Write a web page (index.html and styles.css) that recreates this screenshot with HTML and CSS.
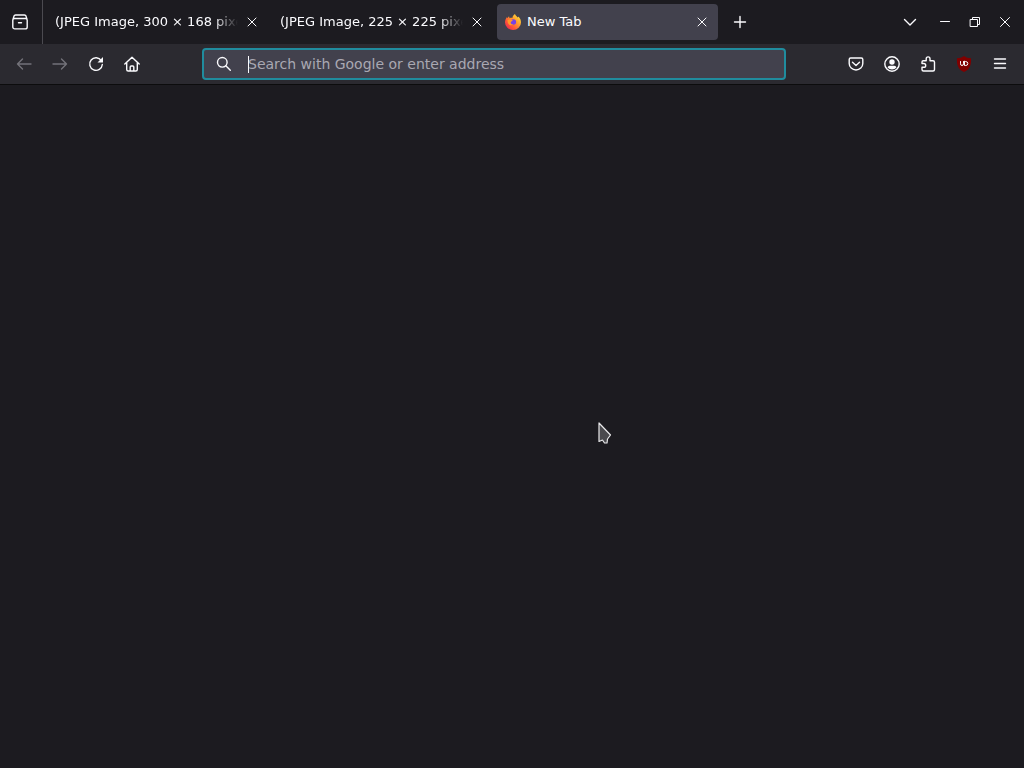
FILE: index.html
```html
<!DOCTYPE html>
<html lang="en">
<head>
<meta charset="UTF-8">
<meta name="viewport" content="width=device-width, initial-scale=1">
<title>New Tab</title>
<link rel="stylesheet" href="styles.css">
</head>
<body>

<!-- shapes used more than once -->
<svg class="defs" aria-hidden="true">
	<symbol id="close" viewBox="0 0 16 16">
		<path d="M4 4l8 8M12 4l-8 8" />
	</symbol>
</svg>

<header class="tabbar">
	<button class="view-button" aria-label="Firefox View">
		<svg class="icon" viewBox="0 0 16 16"><path class="bold" d="M3.500 1h9M2.500 4.500h11a1.700 1.700 0 0 1 1.700 1.700v6.700a2 2 0 0 1-2 2H2.800a2 2 0 0 1-2-2V6.200a1.700 1.700 0 0 1 1.700-1.700zM1 5.200l1-3.100q.4-1.100 1.500-1.100M15 5.200l-1-3.100Q13.600 1 12.500 1M6.500 8.800h3" /></svg>
	</button>

	<nav class="tabs">
		<div class="tab">
			<a class="tab-label fade" href="#">(JPEG Image, 300 × 168 pixels)</a>
			<button class="tab-close" aria-label="Close tab"><svg class="icon"><use href="#close" /></svg></button>
		</div>
		<div class="tab">
			<a class="tab-label fade" href="#">(JPEG Image, 225 × 225 pixels)</a>
			<button class="tab-close" aria-label="Close tab"><svg class="icon"><use href="#close" /></svg></button>
		</div>
		<div class="tab selected">
			<svg class="favicon" viewBox="0 0 16 16" aria-hidden="true">
				<defs>
					<linearGradient id="flame" x1="1" y1="0" x2="0" y2="1">
						<stop offset="0" stop-color="#fff44f" />
						<stop offset=".35" stop-color="#ffa62b" />
						<stop offset=".65" stop-color="#ff5a36" />
						<stop offset="1" stop-color="#e3165d" />
					</linearGradient>
				</defs>
				<path fill="url(#flame)" d="M10 0c.4 1.500 1.600 2.300 2.700 3.400.5-.1.600-.4.600-.8C15 4 16 6.200 16 8.500a8 7.500 0 0 1-16 0C0 6.300.8 4.500 2 3l.3 1.300L4 2.300l.6 1.900c1-.5 2-.5 2.800-.3C7.500 2.300 8.500.8 10 0z" />
				<circle fill="#7542e5" cx="8.300" cy="8" r="2.800" />
				<path fill="#ff9a2a" d="M2.500 6.200c1.700-1.200 3.600-.9 5.300.4-.4.900-1.700.9-2.100 1.500-.3 1.500.9 2.500 2.600 2.200-2.300 2-5.800.5-5.800-4.100z" />
			</svg>
			<a class="tab-label" href="#" aria-current="page">New Tab</a>
			<button class="tab-close" aria-label="Close tab"><svg class="icon"><use href="#close" /></svg></button>
		</div>
	</nav>
	<button class="tool new-tab" aria-label="Open a new tab">
		<svg class="icon" viewBox="0 0 16 16"><path class="bold" d="M8 2.500v11M2.500 8h11" /></svg>
	</button>

	<div class="window-controls">
		<button class="tool list-tabs" aria-label="List all tabs">
			<svg class="icon" viewBox="0 0 16 16"><path class="bold" d="M2.500 5.500L8 11l5.500-5.500" /></svg>
		</button>
		<button class="win" aria-label="Minimize"><svg class="icon" viewBox="0 0 16 16"><path d="M3.500 7.500h9" /></svg></button>
		<button class="win" aria-label="Restore"><svg class="icon" viewBox="0 0 16 16"><path d="M3.500 5.500h7v7h-7zM5.500 5.500v-2h7v7h-2" /></svg></button>
		<button class="win" aria-label="Close"><svg class="icon" viewBox="0 0 16 16"><path d="M3.500 3.500l9 9M12.500 3.500l-9 9" /></svg></button>
	</div>
</header>

<div class="toolbar">
	<button class="tool" aria-label="Back" disabled>
		<svg class="icon" viewBox="0 0 16 16"><path class="bold" d="M15 8H1.500M6.500 3l-5 5 5 5" /></svg>
	</button>
	<button class="tool" aria-label="Forward" disabled>
		<svg class="icon" viewBox="0 0 16 16"><path class="bold" d="M1 8h13.500M9.500 3l5 5-5 5" /></svg>
	</button>
	<button class="tool" aria-label="Reload">
		<svg class="icon" viewBox="0 0 16 16"><path class="bold" d="M13.300 4.600A6.300 6.300 0 1 0 14.300 8.500" /><path class="solid" d="M15 1v5.500H9.500z" /></svg>
	</button>
	<button class="tool" aria-label="Home">
		<svg class="icon" viewBox="0 0 16 16"><path class="bold" d="M.8 8L8 1.200 15.200 8M2.700 6.800v6.700q0 1.500 1.500 1.500h7.600q1.500 0 1.500-1.500V6.800M6.200 15v-4q0-1 1-1h1.600q1 0 1 1v4" /></svg>
	</button>

	<label class="urlbar">
		<svg class="icon" viewBox="0 0 16 16" aria-hidden="true"><circle class="bold" cx="6.300" cy="6.300" r="4.800" /><path class="bold" d="M9.800 9.800l4.500 4.500" /></svg>
		<span class="field">
			<input type="text" placeholder="Search with Google or enter address" aria-label="Search with Google or enter address">
		</span>
	</label>

	<button class="tool" aria-label="Save to Pocket">
		<svg class="icon" viewBox="0 0 16 16"><path class="bold" d="M2.700 2h10.600q1.500 0 1.500 1.500v4a6.800 6.500 0 0 1-13.600 0v-4Q1.200 2 2.700 2zM4.500 6.300L8 9.500l3.500-3.200" /></svg>
	</button>
	<button class="tool" aria-label="Account">
		<svg class="icon" viewBox="0 0 16 16"><circle class="bold" cx="8" cy="8" r="7.200" /><circle class="solid" cx="8" cy="6" r="2.700" /><path class="solid" d="M3.500 11.500q.4-1.700 2.200-1.700h4.600q1.800 0 2.200 1.700Q10.700 13.500 8 13.500T3.500 11.500z" /></svg>
	</button>
	<button class="tool" aria-label="Extensions">
		<svg class="icon" viewBox="0 0 16 16"><path class="bold" d="M2 7.500V6q0-1.200 1.200-1.200h3V2.800a1.900 1.900 0 0 1 3.800 0v2h3q1.500 0 1.500 1.500v7.200q0 1.500-1.500 1.500H3.500Q2 15 2 13.500v-2.200h1.800a1.900 1.900 0 0 0 0-3.800z" /></svg>
	</button>
	<button class="tool" aria-label="uBlock Origin">
		<svg class="icon" viewBox="0 0 16 16"><path class="shield" d="M8 0c2.300 1.600 4 2.200 7 2.300C15.500 9 13.500 14 8 16 2.500 14 .5 9 1 2.300 4 2.200 5.700 1.600 8 0z" /><path d="M4.500 5.500v2.300q0 1.700 1.500 1.700t1.500-1.700V5.500M8.500 5.500v4h1.300a2 2 0 0 0 0-4z" /></svg>
	</button>
	<button class="tool" aria-label="Menu">
		<svg class="icon" viewBox="0 0 16 16"><path class="bold" d="M2.500 3h11M2.500 7.500h11M2.500 12h11" /></svg>
	</button>
</div>

<main class="page"></main>

<svg class="pointer" viewBox="0 0 14 22" aria-hidden="true">
	<path d="M1 1v18.500l3.500-1.500 2 3H9l.5-4 3-4z" />
</svg>

</body>
</html>
```

FILE: styles.css
```css
* {
	box-sizing: border-box;
}

body {
	margin: 0;
	min-height: 100vh;
	display: flex;
	flex-direction: column;
	background: #1c1b20;
	color: #fbfbfe;
	font: 14px/20px "DejaVu Sans", sans-serif;
}

button {
	display: flex;
	align-items: center;
	justify-content: center;
	flex: none;
	padding: 0;
	border: 0;
	background: none;
	color: inherit;
}

button:disabled {
	color: #737279;
}

.defs {
	display: none;
}

.icon {
	display: block;
	flex: none;
	width: 16px;
	height: 16px;
	fill: none;
	stroke: currentColor;
	stroke-width: 1;
	stroke-linecap: round;
	stroke-linejoin: round;
}

.bold {
	stroke-width: 1.4;
}

.solid {
	fill: currentColor;
	stroke: none;
}

.shield {
	fill: #800000;
	stroke: none;
}

/* tab strip */

.tabbar {
	display: flex;
	align-items: center;
	height: 44px;
	background: #1c1b20;
	font-size: 13px;
}

.view-button {
	width: 43px;
	height: 44px;
	padding-right: 2px;
	border-right: 1px solid #4b4a50;
}

.tabs {
	display: flex;
	flex: 0 1 675px;
	gap: 4px;
	min-width: 0;
	padding-left: 4px;
}

.tab {
	display: flex;
	align-items: center;
	flex: 1 1 0;
	min-width: 0;
	height: 36px;
	padding: 0 8px;
	border-radius: 4px;
}

.selected {
	background: #42414d;
}

.favicon {
	flex: none;
	width: 16px;
	height: 16px;
	margin-right: 6px;
}

.tab-label {
	flex: 1;
	overflow: hidden;
	white-space: nowrap;
	color: inherit;
	text-decoration: none;
}

.fade {
	margin-right: 6px;
	-webkit-mask-image: linear-gradient(to left, transparent, #000 24px);
	mask-image: linear-gradient(to left, transparent, #000 24px);
}

.tool {
	width: 36px;
	height: 36px;
}

.new-tab {
	margin-left: 4px;
}

.window-controls {
	display: flex;
	align-items: center;
	margin-left: auto;
	padding-right: 4px;
}

.list-tabs {
	margin-right: 2px;
}

.win {
	width: 30px;
	height: 36px;
}

/* navigation bar */

.toolbar {
	display: flex;
	align-items: center;
	height: 41px;
	padding: 0 6px;
	background: #2b2a30;
	border-bottom: 1px solid #0c0c0d;
}

.urlbar {
	display: flex;
	align-items: center;
	flex: 1;
	gap: 16px;
	min-width: 0;
	height: 32px;
	margin: 0 52px;
	padding: 0 12px;
	background: #42414d;
	border: 2px solid #208c9e;
	border-radius: 4px;
}

.field {
	position: relative;
	flex: 1;
	min-width: 0;
}

/* text caret */
.field::before {
	content: "";
	position: absolute;
	top: 2px;
	left: 0;
	width: 1px;
	height: 17px;
	background: #fbfbfe;
}

.field input {
	display: block;
	width: 100%;
	padding: 0;
	border: 0;
	outline: 0;
	background: none;
	color: inherit;
	font: inherit;
}

.field input::placeholder {
	color: #a9a8b2;
	opacity: 1;
}

.page {
	flex: 1;
	background: #1c1b20;
}

.pointer {
	position: absolute;
	top: 422px;
	left: 598px;
	width: 14px;
	height: 22px;
	fill: #4a4a4e;
	stroke: #e8e8ea;
	stroke-width: 1.2;
	stroke-linejoin: round;
	pointer-events: none;
}
```
